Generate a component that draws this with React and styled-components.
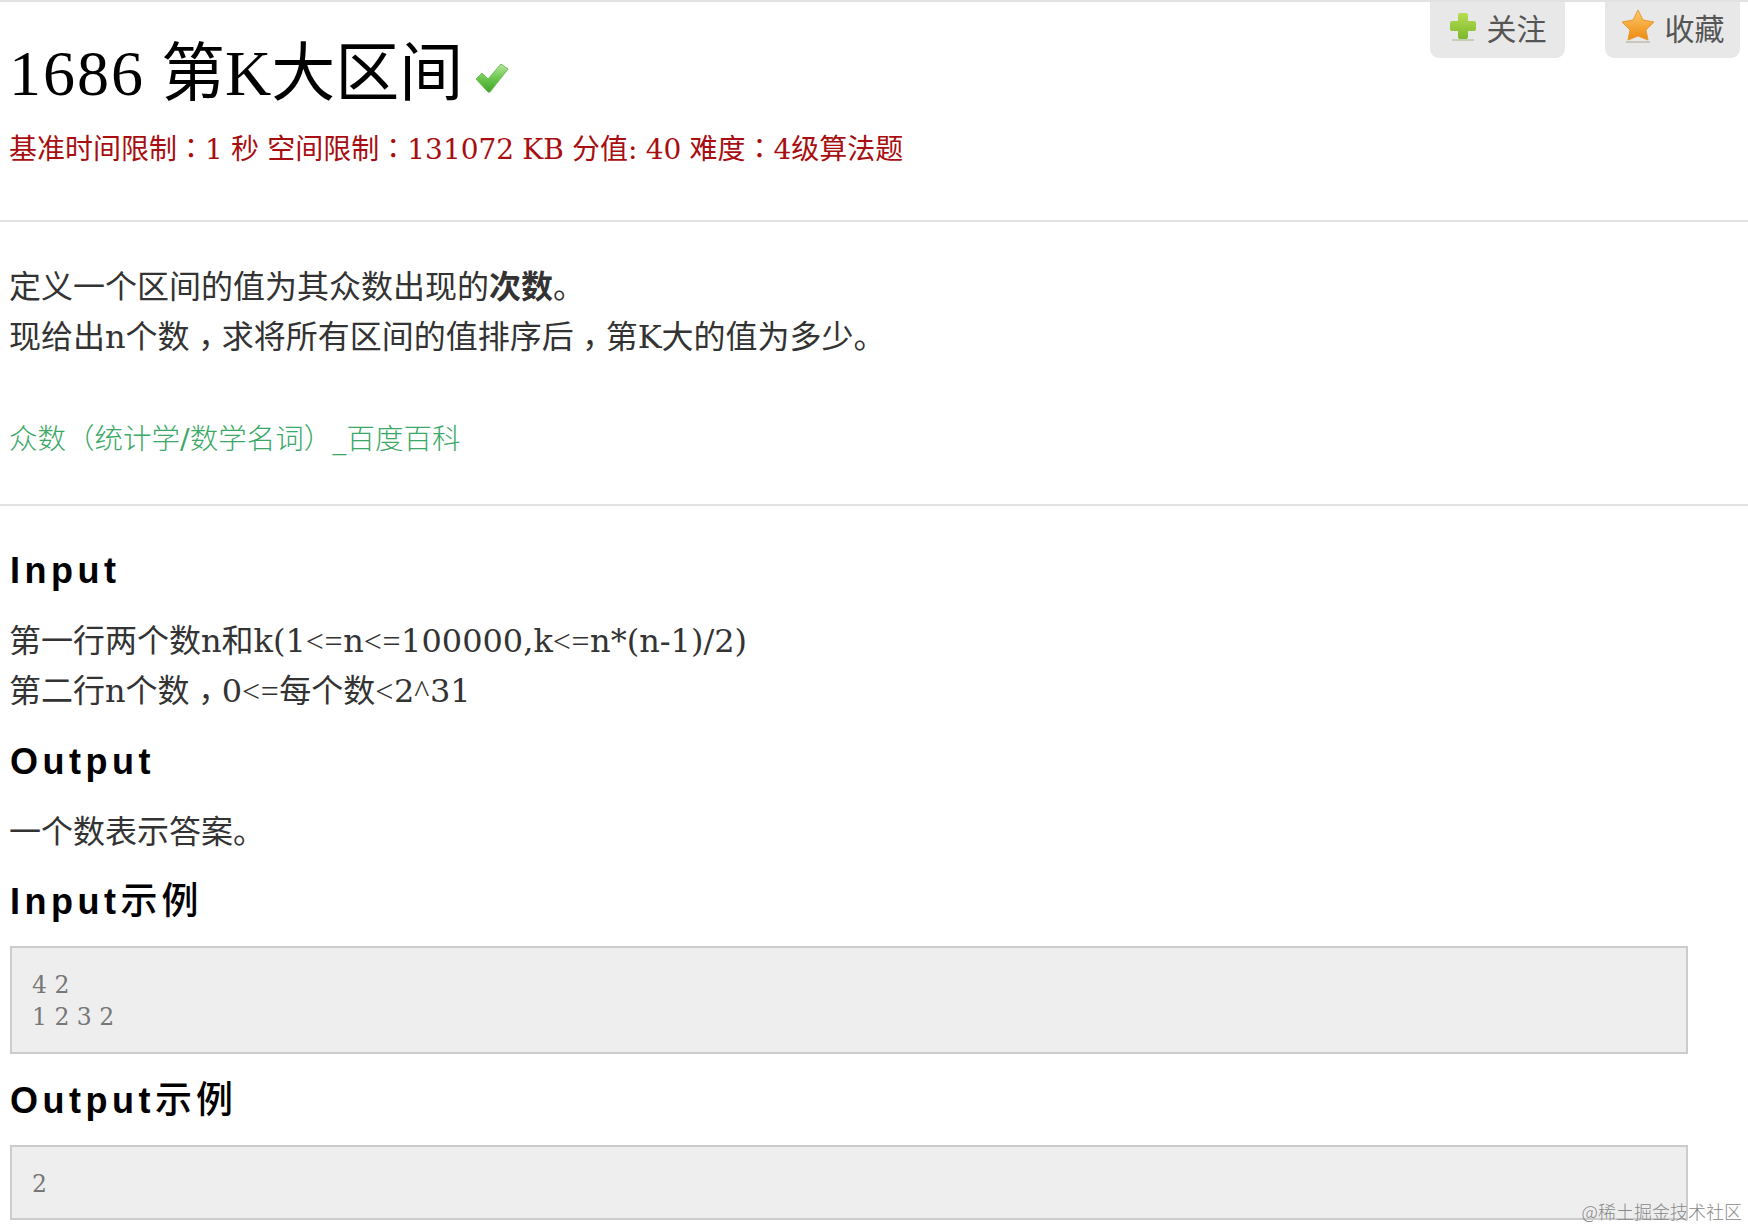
import React from 'react';
import styled, { createGlobalStyle } from 'styled-components';

const Global = createGlobalStyle`
html, body { margin: 0; padding: 0; background: #fff; }
body { width: 1748px; height: 1228px; overflow: hidden; }
`;

const serif = `"DejaVu Serif", "Noto Sans CJK SC", serif`;

const Page = styled.div`
position: relative;
height: 1228px;
overflow: hidden;
border-top: 2px solid #e2e2e2;
box-sizing: border-box;
font-family: ${serif};
color: #333;
`;
const Header = styled.header`
display: flex;
justify-content: space-between;
align-items: flex-start;
padding-left: 9px;
height: 218px;
border-bottom: 2px solid #e2e2e2;
`;
const TitleBlock = styled.div`
display: flex;
flex-direction: column;
`;
const Title = styled.h1`
margin: 36px 0 0;
display: flex;
align-items: center;
font-family: "Liberation Serif", "Noto Sans CJK SC", serif;
font-size: 64px;
line-height: 72px;
font-weight: 400;
color: #000;
white-space: pre;
`;
const TitleNumber = styled.span`
letter-spacing: 2px;
`;
const Meta = styled.div`
margin-top: 22px;
font-size: 28px;
line-height: 36px;
word-spacing: -0.7px;
color: #a80e10;
white-space: nowrap;
`;
const Actions = styled.div`
display: flex;
gap: 40px;
padding-right: 8px;
`;
const Action = styled.div`
width: 135px;
height: 56px;
padding-bottom: 6px;
box-sizing: border-box;
display: flex;
align-items: center;
justify-content: center;
gap: 10px;
background: #e8e8e8;
border-radius: 0 0 9px 9px;
font-family: "Noto Sans CJK SC", sans-serif;
font-size: 30px;
color: #555;
`;
const Description = styled.section`
padding: 40px 0 0 9px;
height: 284px;
box-sizing: border-box;
border-bottom: 2px solid #e2e2e2;
`;
const Body = styled.div`
font-size: 32px;
line-height: 50px;
color: #333;
white-space: nowrap;
`;
// full width punctuation sits in the middle of its cell in the reference
const Punct = styled.span`
font-family: "Noto Sans CJK TC", sans-serif;
line-height: 1;
`;
const Comma = styled(Punct)`
vertical-align: -0.28em;
`;
const Op = styled.span`
font-family: "Liberation Serif", serif;
letter-spacing: 0.6px;
`;
const Link = styled.a`
display: block;
margin-top: 53px;
font-family: ${serif};
font-size: 28.5px;
font-weight: 300;
line-height: 50px;
color: #3aa866;
`;
const Content = styled.section`
padding-left: 9px;
`;
const Heading = styled.h2`
margin: ${p => p.$top}px 0 0;
padding-left: 1px;
font-family: "Liberation Sans", "Noto Sans CJK SC", sans-serif;
font-size: 36px;
line-height: 44px;
font-weight: 700;
letter-spacing: 4.5px;
color: #000;
`;
const HeadingCjk = styled.span`
font-size: 37px;
font-weight: 500;
letter-spacing: 4px;
`;
const Text = styled(Body)`
margin-top: 23px;
`;
const Code = styled.pre`
margin: ${p => p.$top}px 0 0 1px;
width: 1678px;
box-sizing: border-box;
height: ${p => p.$height}px;
padding: 21px 20px 0;
background: #eee;
border: 2px solid #ccc;
font-family: ${serif};
font-size: 23.5px;
line-height: 32px;
color: #777;
`;
const Watermark = styled.div`
position: absolute;
right: 6px;
bottom: 5px;
font-family: "Noto Sans CJK SC", sans-serif;
font-size: 18px;
font-weight: 300;
line-height: 24px;
color: #888;
`;

function CheckIcon() {
  return (
    <svg width="34" height="32" viewBox="0 0 34 32" style={{ marginLeft: 12, marginTop: 8 }}>
      <defs>
        <linearGradient id="chk" x1="0" y1="0" x2="0" y2="1">
          <stop offset="0" stopColor="#b8e6a0" />
          <stop offset=".5" stopColor="#6cc84e" />
          <stop offset="1" stopColor="#3fa32a" />
        </linearGradient>
      </defs>
      <path d="M1 17 L7 11 L13 17 L26 2 L33 7 L15 30 Q13 31 12 29 Z" fill="url(#chk)" stroke="#6abf52" strokeWidth="1" strokeLinejoin="round" />
    </svg>
  );
}

function PlusIcon() {
  return (
    <svg width="28" height="30" viewBox="0 0 28 30">
      <defs>
        <linearGradient id="pls" x1="0" y1="0" x2="0" y2="1">
          <stop offset="0" stopColor="#b9dc52" />
          <stop offset="1" stopColor="#7bb82c" />
        </linearGradient>
      </defs>
      <path d="M11 1 H17 Q19 1 19 3 V9 H25 Q27 9 27 11 V17 Q27 19 25 19 H19 V25 Q19 27 17 27 H11 Q9 27 9 25 V19 H3 Q1 19 1 17 V11 Q1 9 3 9 H9 V3 Q9 1 11 1 Z" fill="url(#pls)" />
      <rect x="3" y="27" width="22" height="2" fill="#c5cdb4" />
    </svg>
  );
}

function StarIcon() {
  return (
    <svg width="34" height="36" viewBox="0 0 34 36">
      <defs>
        <linearGradient id="str" x1="0" y1="0" x2="0" y2="1">
          <stop offset="0" stopColor="#fcc96a" />
          <stop offset="1" stopColor="#ee8a10" />
        </linearGradient>
      </defs>
      <path d="M17 1 L22 11 L33 13 L25 21 L27 31 L17 27 L7 31 L9 21 L1 13 L12 11 Z" fill="url(#str)" stroke="#e59a35" strokeWidth="1" strokeLinejoin="round" />
      <rect x="5" y="32" width="24" height="2" fill="#c9c6bd" />
    </svg>
  );
}

function App() {
  return (
    <Page>
      <Global />
      <Header>
        <TitleBlock>
          <Title><TitleNumber>1686</TitleNumber> 第K大区间<CheckIcon /></Title>
          <Meta>基准时间限制<Punct>：</Punct>1 秒 空间限制<Punct>：</Punct>131072 KB 分值: 40 难度<Punct>：</Punct>4级算法题</Meta>
        </TitleBlock>
        <Actions>
          <Action><PlusIcon />关注</Action>
          <Action><StarIcon />收藏</Action>
        </Actions>
      </Header>
      <Description>
        <Body>定义一个区间的值为其众数出现的<strong>次数</strong>。</Body>
        <Body>现给出n个数<Comma>，</Comma>求将所有区间的值排序后<Comma>，</Comma>第K大的值为多少。</Body>
        <Link>众数<Punct>（</Punct>统计学/数学名词<Punct>）</Punct>_百度百科</Link>
      </Description>
      <Content>
        <Heading $top={43}>Input</Heading>
        <Text>第一行两个数n和k(1<Op>&lt;=</Op>n<Op>&lt;=</Op>100000,k<Op>&lt;=</Op>n*(n-1)/2)</Text>
        <Body>第二行n个数<Comma>，</Comma>0<Op>&lt;=</Op>每个数<Op>&lt;</Op>2<Op>^</Op>31</Body>
        <Heading $top={24}>Output</Heading>
        <Text>一个数表示答案。</Text>
        <Heading $top={23}>Input<HeadingCjk>示例</HeadingCjk></Heading>
        <Code $top={22} $height={108}>{'4 2\n1 2 3 2'}</Code>
        <Heading $top={25}>Output<HeadingCjk>示例</HeadingCjk></Heading>
        <Code $top={22} $height={75}>2</Code>
      </Content>
      <Watermark>@稀土掘金技术社区</Watermark>
    </Page>
  );
}

export default App;
